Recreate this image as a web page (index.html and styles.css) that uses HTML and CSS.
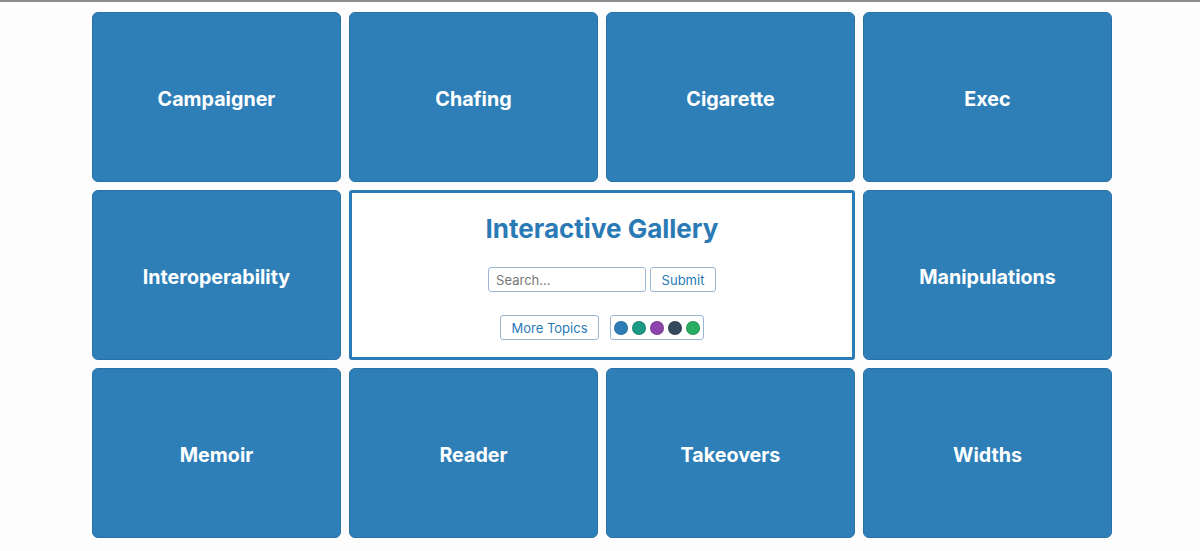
FILE: index.html
```html
<!DOCTYPE html>
<html lang="en">
<head>
<meta charset="utf-8">
<title>Interactive Gallery</title>
<link rel="stylesheet" href="styles.css">
</head>
<body>
<div class="topline"></div>
<main class="gallery">
  <div class="tile">Campaigner</div>
  <div class="tile">Chafing</div>
  <div class="tile">Cigarette</div>
  <div class="tile">Exec</div>
  <div class="tile">Interoperability</div>
  <section class="center">
    <h1 class="title">Interactive Gallery</h1>
    <form class="search" onsubmit="return false">
      <input class="search-input" type="text" placeholder="Search...">
      <button class="btn" type="submit">Submit</button>
    </form>
    <div class="controls">
      <button class="btn more" type="button">More Topics</button>
      <div class="swatches">
        <span class="dot dot-blue"></span>
        <span class="dot dot-teal"></span>
        <span class="dot dot-purple"></span>
        <span class="dot dot-navy"></span>
        <span class="dot dot-green"></span>
      </div>
    </div>
  </section>
  <div class="tile">Manipulations</div>
  <div class="tile">Memoir</div>
  <div class="tile">Reader</div>
  <div class="tile">Takeovers</div>
  <div class="tile">Widths</div>
</main>
</body>
</html>
```
FILE: styles.css
```css
html, body {
  margin: 0;
  padding: 0;
  background: #fdfdfd;
  font-family: Inter, "Liberation Sans", sans-serif;
}

.topline {
  height: 2px;
  background: #8c8c8c;
}

.gallery {
  display: grid;
  grid-template-columns: repeat(4, 1fr);
  grid-template-rows: repeat(3, 170px);
  gap: 8px;
  width: 1020px;
  margin: 10px 0 0 92px;
}

.tile {
  display: flex;
  align-items: center;
  justify-content: center;
  padding-top: 3px;
  background: #2e7fb8;
  border: 1px solid #2a71a5;
  border-radius: 6px;
  color: #ffffff;
  font-size: 19.7px;
  font-weight: 700;
}

.center {
  grid-column: 2 / span 2;
  background: #ffffff;
  border: 3px solid #2a7ab5;
  border-radius: 3px;
  display: flex;
  flex-direction: column;
  align-items: center;
  box-sizing: border-box;
}

.title {
  margin: 20px 0 0;
  font-size: 26px;
  font-weight: 700;
  color: #2a7ab5;
  line-height: 32px;
}

.search {
  display: flex;
  gap: 4px;
  margin-top: 22px;
}

.search-input {
  width: 158px;
  height: 25px;
  box-sizing: border-box;
  border: 1px solid #9bb6d2;
  border-radius: 3px;
  padding: 0 7px;
  font-family: Inter, "Liberation Sans", sans-serif;
  font-size: 13px;
  color: #333;
  background: #fff;
}

.search-input::placeholder {
  color: #777;
}

.btn {
  height: 25px;
  box-sizing: border-box;
  border: 1px solid #9bb6d2;
  border-radius: 3px;
  background: #fff;
  color: #2a7ab5;
  font-family: Inter, "Liberation Sans", sans-serif;
  font-size: 13px;
  padding: 0 10.5px;
}

.controls {
  display: flex;
  gap: 11px;
  margin-top: 23px;
}

.swatches {
  display: flex;
  align-items: center;
  gap: 4px;
  height: 25px;
  box-sizing: border-box;
  border: 1px solid #9bb6d2;
  border-radius: 3px;
  padding: 0 3px;
  background: #fff;
}

.dot {
  width: 14px;
  height: 14px;
  border-radius: 50%;
  box-sizing: border-box;
  border: 1px solid rgba(0, 0, 0, 0.15);
}

.dot-blue { background: #2e7fb8; }
.dot-teal { background: #1a9a85; }
.dot-purple { background: #8e44ad; }
.dot-navy { background: #34495e; }
.dot-green { background: #27ae60; }
```
